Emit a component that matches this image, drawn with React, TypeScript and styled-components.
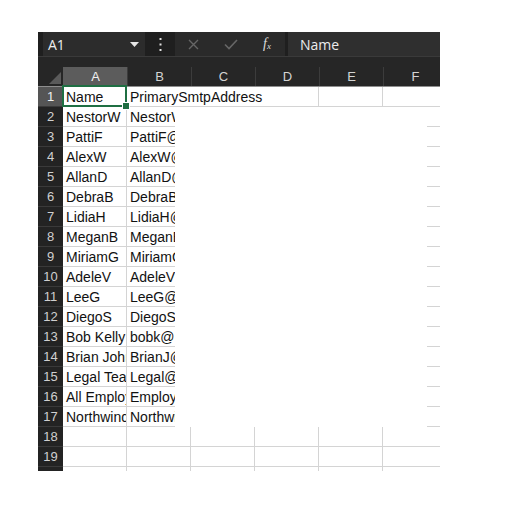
import React from 'react';
import { styled, createGlobalStyle } from 'styled-components';

const GlobalStyle = createGlobalStyle`
  html, body {
    margin: 0;
    padding: 0;
    background: #ffffff;
  }
`;

const CELL_FONT = `'Liberation Sans', Arial, sans-serif`;

const columns = ['A', 'B', 'C', 'D', 'E', 'F'];

const people = [
  ['NestorW', 'NestorW@M365x.OnMicrosoft.com'],
  ['PattiF', 'PattiF@M365x.OnMicrosoft.com'],
  ['AlexW', 'AlexW@M365x.OnMicrosoft.com'],
  ['AllanD', 'AllanD@M365x.OnMicrosoft.com'],
  ['DebraB', 'DebraB@M365x.OnMicrosoft.com'],
  ['LidiaH', 'LidiaH@M365x.OnMicrosoft.com'],
  ['MeganB', 'MeganB@M365x.OnMicrosoft.com'],
  ['MiriamG', 'MiriamG@M365x.OnMicrosoft.com'],
  ['AdeleV', 'AdeleV@M365x.OnMicrosoft.com'],
  ['LeeG', 'LeeG@M365x.OnMicrosoft.com'],
  ['DiegoS', 'DiegoS@M365x.OnMicrosoft.com'],
  ['Bob Kelly', 'bobk@M365x.OnMicrosoft.com'],
  ['Brian Johnson', 'BrianJ@M365x.OnMicrosoft.com'],
  ['Legal Team', 'Legal@M365x.OnMicrosoft.com'],
  ['All Employees', 'Employees@M365x.OnMicrosoft.com'],
  ['Northwind Traders', 'Northwind@M365x.OnMicrosoft.com'],
];

const App = () => {
  return (
    <>
      <GlobalStyle />
      <Sheet>
        <FormulaBar>
          <NameBox>
            <span>A1</span>
            <svg width="9" height="5" viewBox="0 0 9 5">
              <path d="M0 0 L9 0 L4.5 5 Z" fill="#e6e6e6" />
            </svg>
          </NameBox>
          <MenuDots>
            <svg width="3" height="13" viewBox="0 0 3 13">
              <rect x="0.5" y="0" width="2" height="2" fill="#e0e0e0" />
              <rect x="0.5" y="5.5" width="2" height="2" fill="#e0e0e0" />
              <rect x="0.5" y="11" width="2" height="2" fill="#e0e0e0" />
            </svg>
          </MenuDots>
          <EditBox>
            <IconSlot>
              <svg width="11" height="11" viewBox="0 0 11 11">
                <path d="M1 1 L10 10 M10 1 L1 10" stroke="#666" strokeWidth="1.4" />
              </svg>
            </IconSlot>
            <IconSlot>
              <svg width="14" height="11" viewBox="0 0 14 11">
                <path d="M1 5.5 L5 9.5 L13 1" stroke="#666" strokeWidth="1.6" fill="none" />
              </svg>
            </IconSlot>
            <Fx>
              f<sub>x</sub>
            </Fx>
          </EditBox>
          <FormulaInput>Name</FormulaInput>
        </FormulaBar>

        <HeaderStrip>
          <Corner>
            <svg width="12" height="12" viewBox="0 0 12 12">
              <path d="M12 0 L12 12 L0 12 Z" fill="#5a5a5a" />
            </svg>
          </Corner>
          {columns.map((c) => (
            <ColHead key={c} $active={c === 'A'}>
              {c}
            </ColHead>
          ))}
        </HeaderStrip>

        <Row>
          <RowHead $active>1</RowHead>
          <Cell $width={64} $active>
            Name
            <ActiveBorder>
              <FillHandle />
            </ActiveBorder>
          </Cell>
          <Cell $width={192}>PrimarySmtpAddress</Cell>
          <Cell $width={64} />
          <Cell $width={64} />
        </Row>

        {people.map(([name, mail], i) => (
          <Row key={name}>
            <RowHead>{i + 2}</RowHead>
            <Cell $width={64}>{name}</Cell>
            <Cell $width={48} $noRight>
              {mail}
            </Cell>
            <Blank />
          </Row>
        ))}

        {[18, 19].map((n) => (
          <Row key={n}>
            <RowHead>{n}</RowHead>
            {columns.map((c) => (
              <Cell key={c} $width={64} />
            ))}
          </Row>
        ))}

        <TailRow>
          <TailHead />
          {columns.map((c) => (
            <TailCell key={c} />
          ))}
        </TailRow>
      </Sheet>
    </>
  );
};

const Sheet = styled.div`
  margin: 32px 0 0 38px;
  width: 402px;
  overflow: hidden;
  font-family: ${CELL_FONT};
`;

const FormulaBar = styled.div`
  display: flex;
  height: 24px;
  background: #1f1f1f;
  border-bottom: 1px solid #3a3a3a;
`;

const NameBox = styled.div`
  display: flex;
  align-items: center;
  justify-content: space-between;
  box-sizing: border-box;
  width: 102px;
  margin-left: 5px;
  padding: 0 6px 0 5px;
  background: #2c2c2c;
  color: #ececec;
  font-family: 'Open Sans', sans-serif;
  font-size: 14px;
`;

const MenuDots = styled.div`
  display: flex;
  align-items: center;
  justify-content: center;
  width: 30px;
`;

const EditBox = styled.div`
  display: flex;
  align-items: center;
  width: 110px;
  background: #2a2a2a;
`;

const IconSlot = styled.div`
  display: flex;
  align-items: center;
  justify-content: center;
  width: 37px;
`;

const Fx = styled.div`
  flex: 1;
  text-align: center;
  color: #dcdcdc;
  font-family: 'Liberation Serif', serif;
  font-style: italic;
  font-size: 14px;

  sub {
    font-size: 9px;
    vertical-align: -1px;
  }
`;

const FormulaInput = styled.div`
  flex: 1;
  display: flex;
  align-items: center;
  margin-left: 3px;
  padding-left: 12px;
  background: #2f2f2f;
  color: #ececec;
  font-family: 'Open Sans', sans-serif;
  font-size: 14px;
`;

const HeaderStrip = styled.div`
  display: flex;
  padding-top: 10px;
  background: #262626;
  border-bottom: 1px solid #8e8e8e;
`;

const Corner = styled.div`
  display: flex;
  align-items: flex-end;
  justify-content: flex-end;
  box-sizing: border-box;
  flex: 0 0 25px;
  height: 19px;
  padding: 0 2px 2px 0;
`;

const ColHead = styled.div<{ $active?: boolean }>`
  flex: 0 0 64px;
  box-sizing: border-box;
  height: 19px;
  line-height: 19px;
  text-align: center;
  font-size: 13px;
  color: ${(p) => (p.$active ? '#f0f0f0' : '#d4d4d4')};
  background: ${(p) => (p.$active ? '#5c5c5c' : 'transparent')};
  border-left: 1px solid ${(p) => (p.$active ? '#5c5c5c' : '#3c3c3c')};
`;

const Row = styled.div`
  display: flex;
  height: 20px;
`;

const RowHead = styled.div<{ $active?: boolean }>`
  flex: 0 0 25px;
  box-sizing: border-box;
  height: 20px;
  line-height: 19px;
  text-align: center;
  font-size: 13px;
  color: ${(p) => (p.$active ? '#f0f0f0' : '#d0d0d0')};
  background: ${(p) => (p.$active ? '#555555' : '#232323')};
  border-bottom: 1px solid #3a3a3a;
`;

const Cell = styled.div<{ $width: number; $noRight?: boolean; $active?: boolean }>`
  position: relative;
  flex: 0 0 ${(p) => p.$width}px;
  box-sizing: border-box;
  height: 20px;
  padding-left: 3px;
  line-height: 20px;
  font-size: 14px;
  color: #111;
  white-space: nowrap;
  overflow: ${(p) => (p.$active ? 'visible' : 'hidden')};
  z-index: ${(p) => (p.$active ? 2 : 'auto')};
  border-bottom: 1px solid #d4d4d4;
  border-right: ${(p) => (p.$noRight ? 'none' : '1px solid #d4d4d4')};
`;

const ActiveBorder = styled.div`
  position: absolute;
  top: -2px;
  left: -1px;
  right: -1px;
  bottom: -1px;
  border: 2px solid #1f6f43;
`;

const FillHandle = styled.div`
  position: absolute;
  right: -5px;
  bottom: -5px;
  width: 6px;
  height: 6px;
  background: #1f6f43;
  border: 1px solid #ffffff;
`;

const Blank = styled.div`
  flex: 1;
  position: relative;

  &::after {
    content: '';
    position: absolute;
    right: 0;
    bottom: 0;
    width: 13px;
    height: 1px;
    background: #d4d4d4;
  }
`;

const TailRow = styled.div`
  display: flex;
  height: 4px;
`;

const TailHead = styled.div`
  flex: 0 0 25px;
  background: #232323;
`;

const TailCell = styled.div`
  flex: 0 0 64px;
  box-sizing: border-box;
  border-right: 1px solid #d4d4d4;
`;

export default App;
